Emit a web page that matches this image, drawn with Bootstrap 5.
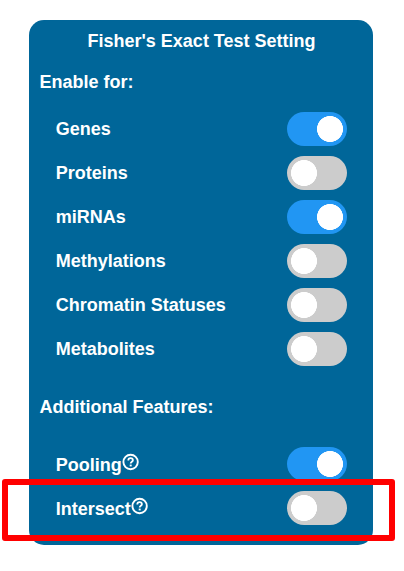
<!DOCTYPE html>
<html lang="en">
<head>
<meta charset="utf-8">
<meta name="viewport" content="width=device-width, initial-scale=1">
<title>Fisher's Exact Test Setting</title>
<link href="https://cdn.jsdelivr.net/npm/bootstrap@5.3.0/dist/css/bootstrap.min.css" rel="stylesheet">
<style>
body{background:#fff;font-family:"Liberation Sans",Arial,sans-serif;font-size:18px;line-height:20px;overflow:hidden}
.panel{width:344px;height:525px;margin:20px 0 0 29px;padding:11px 10px 0 10.5px;background:#069;border-radius:15px}
.panel-title{padding-left:.6px}
.group-title{height:20px;margin-top:21px}
.extra-title{margin-top:31px}
.options{padding:0 16px 0 16.3px;gap:10px}
.options-main{margin-top:20px}
.options-extra{margin-top:30px}
.option{height:34px}
.option-extra-name{padding-top:2px}
.toggle.form-check-input{width:60px;height:34px;margin:0;border:0;border-radius:34px;background-color:#ccc;background-size:26px 26px;background-position:4px center;background-repeat:no-repeat;background-image:radial-gradient(circle,#fff 12.7px,transparent 13.3px);transition:none}
.toggle.form-check-input:checked{background-color:#2196f3;background-position:30px center;background-image:radial-gradient(circle,#fff 12.7px,transparent 13.3px)}
.help{width:17px;height:17px;margin-top:-6px;overflow:visible}
.highlight{left:2px;top:479px;width:393px;height:62px;border:6px solid red;border-radius:3px;pointer-events:none}
</style>
</head>
<body class="position-relative">
<main class="panel text-white fw-bold">
  <div class="panel-title text-center">Fisher's Exact Test Setting</div>
  <div class="group-title">Enable for:</div>
  <div class="options options-main d-flex flex-column">
    <label class="option d-flex align-items-center justify-content-between"><span>Genes</span><input class="form-check-input toggle" type="checkbox" checked></label>
    <label class="option d-flex align-items-center justify-content-between"><span>Proteins</span><input class="form-check-input toggle" type="checkbox"></label>
    <label class="option d-flex align-items-center justify-content-between"><span>miRNAs</span><input class="form-check-input toggle" type="checkbox" checked></label>
    <label class="option d-flex align-items-center justify-content-between"><span>Methylations</span><input class="form-check-input toggle" type="checkbox"></label>
    <label class="option d-flex align-items-center justify-content-between"><span>Chromatin Statuses</span><input class="form-check-input toggle" type="checkbox"></label>
    <label class="option d-flex align-items-center justify-content-between"><span>Metabolites</span><input class="form-check-input toggle" type="checkbox"></label>
  </div>
  <div class="group-title extra-title">Additional Features:</div>
  <div class="options options-extra d-flex flex-column">
    <label class="option d-flex align-items-center justify-content-between"><span class="option-extra-name d-flex align-items-center">Pooling<svg class="help" viewBox="0 0 17 17" fill="none" stroke="#fff"><circle cx="8.6" cy="8" r="7.2" stroke-width="1.9"/><path d="M6.3 6.4C6.3 4.9 7.3 4.1 8.6 4.1S10.9 4.9 10.9 6.3C10.9 7.8 8.7 7.9 8.7 9.6" stroke-width="1.8"/><path d="M8.7 10.6V12.4" stroke-width="2"/></svg></span><input class="form-check-input toggle" type="checkbox" checked></label>
    <label class="option d-flex align-items-center justify-content-between"><span class="option-extra-name d-flex align-items-center">Intersect<svg class="help" viewBox="0 0 17 17" fill="none" stroke="#fff"><circle cx="8.6" cy="8" r="7.2" stroke-width="1.9"/><path d="M6.3 6.4C6.3 4.9 7.3 4.1 8.6 4.1S10.9 4.9 10.9 6.3C10.9 7.8 8.7 7.9 8.7 9.6" stroke-width="1.8"/><path d="M8.7 10.6V12.4" stroke-width="2"/></svg></span><input class="form-check-input toggle" type="checkbox"></label>
  </div>
</main>
<div class="highlight position-absolute"></div>
<script src="https://cdn.jsdelivr.net/npm/bootstrap@5.3.0/dist/js/bootstrap.bundle.min.js"></script>
</body>
</html>
